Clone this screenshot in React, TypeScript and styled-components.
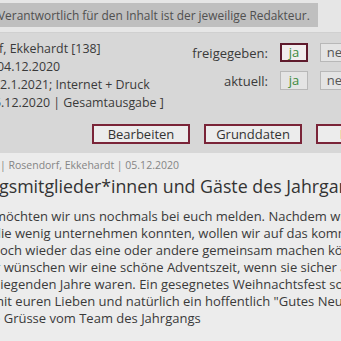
import React from "react";
import styled, { createGlobalStyle } from "styled-components";

const GlobalStyle = createGlobalStyle`
    html, body {
        margin: 0;
        padding: 0;
        background: #ececec;
        overflow: hidden;
    }
    body {
        font-family: "Open Sans", "Noto Sans", sans-serif;
        color: #3a3a3a;
    }
`;

const Page = styled.div`
    width: 341px;
    height: 341px;
    overflow: hidden;
`;

const NoticeBar = styled.div`
    background: #e6e6e6;
    padding: 3px 0 5px 0;
    border-bottom: 1px solid #d0d0d0;
`;

const Notice = styled.div`
    display: inline-block;
    background: #bfbfbf;
    color: #505050;
    font-size: 11.9px;
    line-height: 24px;
    padding-right: 8px;
    white-space: nowrap;
`;

const Cut = styled.span<{ $shift: number }>`
    display: inline-block;
    margin-left: ${(p) => -p.$shift}px;
`;

const Panel = styled.div`
    background: #d7d7d7;
    padding: 7px 0 9px 0;
`;

const PanelTop = styled.div`
    display: flex;
    justify-content: space-between;
    align-items: flex-start;
    height: 84px;
`;

const InfoList = styled.div`
    display: flex;
    flex-direction: column;
    font-size: 12.4px;
    line-height: 18px;
    color: #3a3a3a;
    white-space: nowrap;
`;

const StatusGrid = styled.div`
    display: grid;
    grid-template-columns: auto 28px 40px;
    column-gap: 12px;
    row-gap: 9px;
    align-items: center;
    align-content: start;
    margin-top: 3px;
    margin-right: -19px;
    font-size: 13px;
`;

const StatusLabel = styled.span`
    text-align: right;
    color: #3a3a3a;
`;

const StatusButton = styled.button<{ $active?: boolean; $green?: boolean }>`
    height: 19px;
    padding: 0;
    font-family: inherit;
    font-size: 13px;
    line-height: 15px;
    background: ${(p) => (p.$active ? "#f1eded" : "#e4e4e4")};
    border: ${(p) => (p.$active ? "2px solid #5e1a2c" : "1px solid #b8b8b8")};
    color: ${(p) => (p.$green ? "#3b8a3b" : "#555")};
`;

const ActionRow = styled.div`
    display: flex;
    gap: 14px;
    padding-left: 92px;
`;

const ActionButton = styled.button`
    flex: 0 0 98px;
    height: 20px;
    padding: 0;
    font-family: inherit;
    font-size: 13px;
    line-height: 16px;
    background: #ececec;
    color: #333;
    border: 2px solid #7a2438;
`;

const Article = styled.div`
    padding-top: 4px;
    white-space: nowrap;
`;

const Meta = styled.div`
    font-size: 10.5px;
    line-height: 16px;
    color: #858585;
`;

const Heading = styled.div`
    font-size: 17.8px;
    line-height: 24px;
    color: #333;
    margin-top: 1px;
`;

const Body = styled.div`
    margin-top: 10px;
    font-size: 13px;
    line-height: 17px;
    color: #3a3a3a;
`;

const Line = styled.div``;

const info: [string, number][] = [
    ["rf, Ekkehardt [138]", 6],
    ["04.12.2020", 3],
    ["12.1.2021; Internet + Druck", 7],
    ["5.12.2020 | Gesamtausgabe ]", 6],
];

const body: [string, number][] = [
    ["möchten wir uns nochmals bei euch melden. Nachdem wir", 6],
    ["die wenig unternehmen konnten, wollen wir auf das kommende", 7],
    ["noch wieder das eine oder andere gemeinsam machen können", 8],
    ["r wünschen wir eine schöne Adventszeit, wenn sie sicher auch", 5],
    ["liegenden Jahre waren. Ein gesegnetes Weihnachtsfest soll", 3],
    ["mit euren Lieben und natürlich ein hoffentlich \"Gutes Neues\"", 8],
    ["e Grüsse vom Team des Jahrgangs", 7],
];

export default function App() {
    return (
        <Page>
            <GlobalStyle />
            <NoticeBar>
                <Notice>
                    <Cut $shift={2}>Verantwortlich für den Inhalt ist der jeweilige Redakteur.</Cut>
                </Notice>
            </NoticeBar>
            <Panel>
                <PanelTop>
                    <InfoList>
                        {info.map(([text, shift]) => (
                            <Line key={text}>
                                <Cut $shift={shift}>{text}</Cut>
                            </Line>
                        ))}
                    </InfoList>
                    <StatusGrid>
                        <StatusLabel>freigegeben:</StatusLabel>
                        <StatusButton $active $green>ja</StatusButton>
                        <StatusButton>nein</StatusButton>
                        <StatusLabel>aktuell:</StatusLabel>
                        <StatusButton $green>ja</StatusButton>
                        <StatusButton>nein</StatusButton>
                    </StatusGrid>
                </PanelTop>
                <ActionRow>
                    <ActionButton>Bearbeiten</ActionButton>
                    <ActionButton>Grunddaten</ActionButton>
                    <ActionButton>Löschen</ActionButton>
                </ActionRow>
            </Panel>
            <Article>
                <Meta>| Rosendorf, Ekkehardt | 05.12.2020</Meta>
                <Heading>
                    <Cut $shift={1}>gsmitglieder*innen und Gäste des Jahrgangs</Cut>
                </Heading>
                <Body>
                    {body.map(([text, shift]) => (
                        <Line key={text}>
                            <Cut $shift={shift}>{text}</Cut>
                        </Line>
                    ))}
                </Body>
            </Article>
        </Page>
    );
}
